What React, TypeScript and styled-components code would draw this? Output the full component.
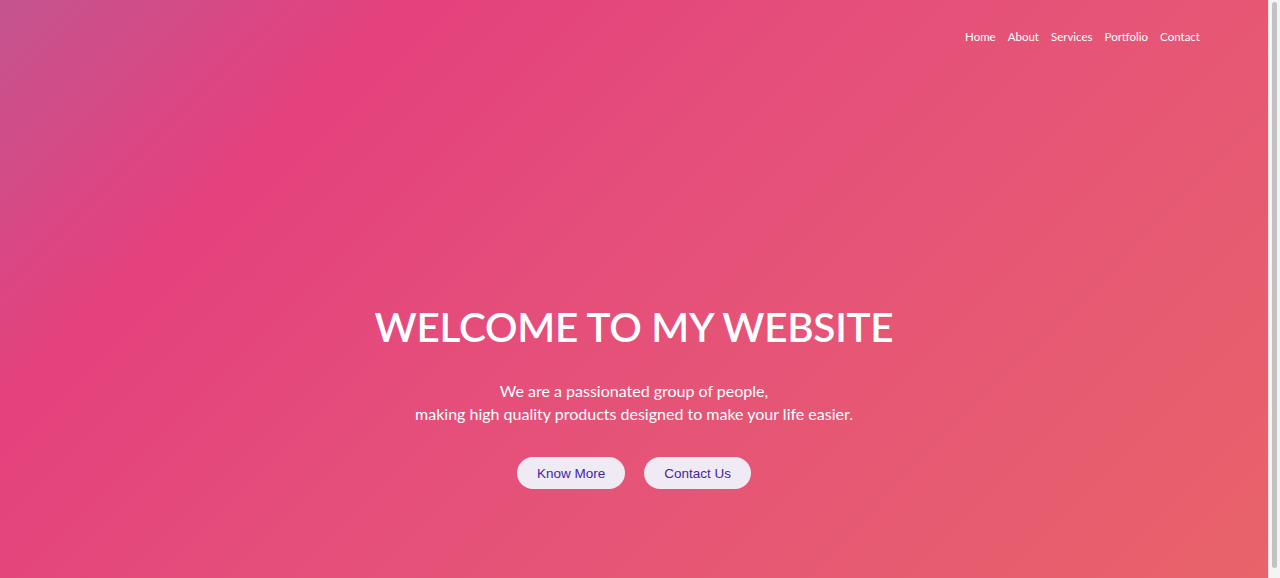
import styled, { createGlobalStyle } from "styled-components"

const GlobalStyle = createGlobalStyle`
    html, body {
        margin: 0;
        padding: 0;
        overflow: hidden;
    }
    body {
        font-family: Lato, "Open Sans", sans-serif;
        color: #ffffff;
    }
    * {
        box-sizing: border-box;
    }
`

const Page = styled.div`
    display: flex;
    height: 100vh;
`

const Hero = styled.section`
    flex: 1;
    display: flex;
    flex-direction: column;
    background: linear-gradient(135deg, #c4548f 0%, #e4417d 22%, #e5507a 50%, #e8636a 100%);
`

// stands in for the browser's scroll bar seen on the right of the shot
const ScrollRail = styled.div`
    width: 12px;
    padding: 2px 3px 10px 3px;
    background: #f4f4f4;
    border-left: 1px solid #e2e2e2;
`

const ScrollThumb = styled.div`
    height: 100%;
    border-radius: 4px;
    background: #c2c2c2;
`

const Header = styled.header`
    display: flex;
    justify-content: flex-end;
    padding: 30px 68px 0 0;
`

const NavList = styled.nav`
    display: flex;
    gap: 12px;
`

const NavLink = styled.a`
    color: #ffffff;
    font-size: 11.5px;
    text-decoration: none;
    cursor: pointer;
`

const Content = styled.main`
    display: flex;
    flex-direction: column;
    align-items: center;
    padding-top: 258px;
    text-align: center;
`

const Title = styled.h1`
    margin: 0;
    font-size: 40.5px;
    font-weight: 600;
    letter-spacing: -0.3px;
    line-height: 52px;
`

const Tagline = styled.p`
    margin: 27px 0 0;
    font-size: 16px;
    line-height: 22.5px;
`

const Actions = styled.div`
    display: flex;
    gap: 19px;
    margin-top: 32px;
`

const PillButton = styled.button`
    height: 32px;
    padding: 0 20px;
    border: none;
    border-radius: 16px;
    background: #efeaf3;
    color: #44279f;
    font-family: "Liberation Sans", Arial, sans-serif;
    font-size: 13.5px;
    cursor: pointer;
`

const links = ["Home", "About", "Services", "Portfolio", "Contact"]

export default function App() {
    return <>
        <GlobalStyle />
        <Page>
            <Hero>
                <Header>
                    <NavList>
                        {links.map(link => <NavLink key={link}>{link}</NavLink>)}
                    </NavList>
                </Header>
                <Content>
                    <Title>WELCOME TO MY WEBSITE</Title>
                    <Tagline>
                        We are a passionated group of people,<br />
                        making high quality products designed to make your life easier.
                    </Tagline>
                    <Actions>
                        <PillButton>Know More</PillButton>
                        <PillButton>Contact Us</PillButton>
                    </Actions>
                </Content>
            </Hero>
            <ScrollRail>
                <ScrollThumb />
            </ScrollRail>
        </Page>
    </>
}
